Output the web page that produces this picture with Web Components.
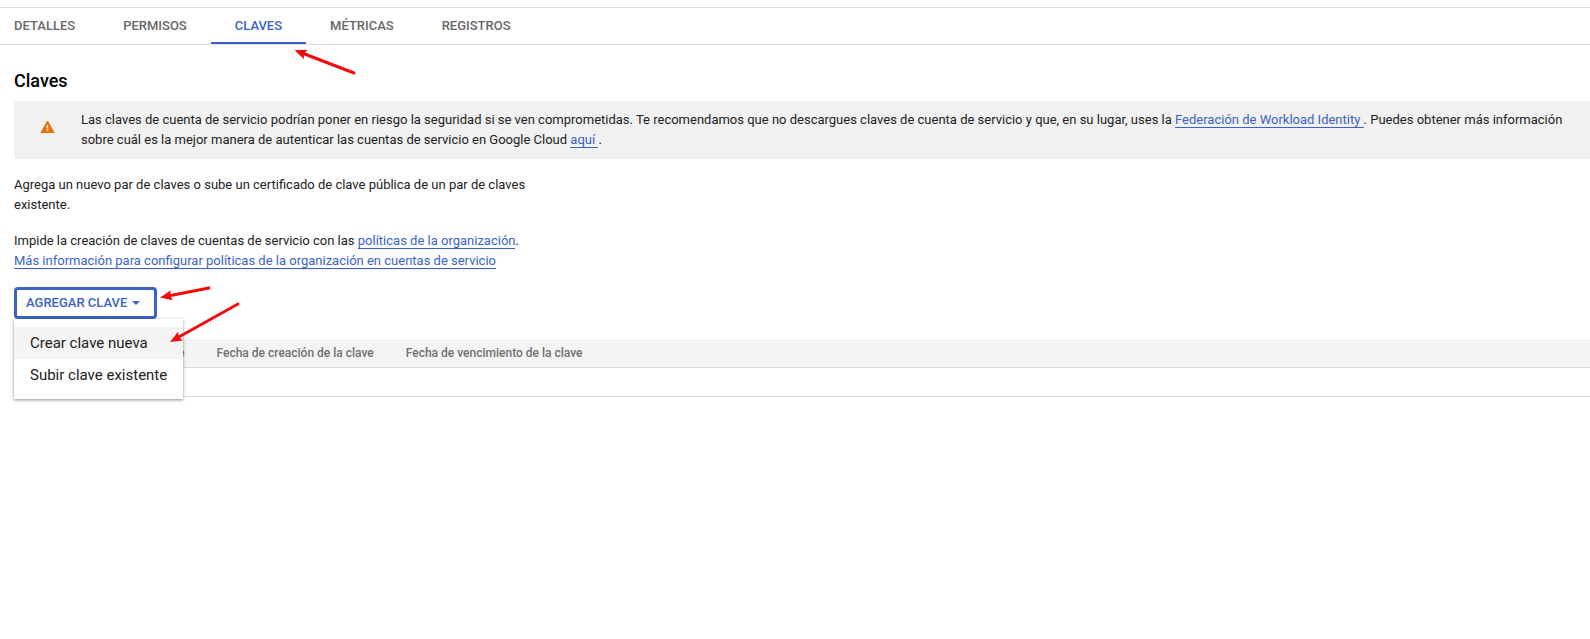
<!DOCTYPE html>
<html lang="es">
<head>
<meta charset="utf-8">
<title>Claves</title>
<style>
body {
    --blue: #3b63c6;
    --line: #dedede;
    box-sizing: border-box;
    min-height: 100vh;
    margin: 0;
    padding-top: 7px;
    background: #fff;
    color: #212121;
    font: 13px/20px Roboto, Arial, sans-serif;
}
main { padding: 25px 0 0 14px; }
h1 { margin: 0 0 9px; color: #000; font-size: 18px; line-height: 22px; font-weight: 500; }
p { max-width: 528px; margin: 16px 0; }
</style>
</head>
<body>

<tab-bar>
    <tab-link>DETALLES</tab-link>
    <tab-link>PERMISOS</tab-link>
    <tab-link selected>CLAVES</tab-link>
    <tab-link>MÉTRICAS</tab-link>
    <tab-link>REGISTROS</tab-link>
</tab-bar>

<main>
    <h1>Claves</h1>
    <warning-box>Las claves de cuenta de servicio podrían poner en riesgo la seguridad si se ven comprometidas. Te recomendamos que no descargues claves de cuenta de servicio y que, en su lugar, uses la <text-link>Federación de Workload Identity&nbsp;</text-link>. Puedes obtener más información sobre cuál es la mejor manera de autenticar las cuentas de servicio en Google Cloud <text-link>aquí&nbsp;</text-link>.</warning-box>
    <p>Agrega un nuevo par de claves o sube un certificado de clave pública de un par de claves existente.</p>
    <p>Impide la creación de claves de cuentas de servicio con las <text-link>políticas de la organización</text-link>.<br>
    <text-link>Más información para configurar políticas de la organización en cuentas de servicio</text-link></p>
    <menu-button label="AGREGAR CLAVE">
        <menu-option active>Crear clave nueva</menu-option>
        <menu-option>Subir clave existente</menu-option>
    </menu-button>
    <key-table></key-table>
</main>

<arrow-notes></arrow-notes>

<script>
class TabBar extends HTMLElement {
    constructor() {
        super();
        this.attachShadow({ mode: 'open' }).innerHTML = `
        <style>
        :host { display: block; border: solid var(--line); border-width: 1px 0; }
        nav { display: flex; margin-left: -10px; }
        </style>
        <nav><slot></slot></nav>
        `;
    }
}

class TabLink extends HTMLElement {
    constructor() {
        super();
        this.attachShadow({ mode: 'open' }).innerHTML = `
        <style>
        :host { display: block; }
        a {
            display: block;
            padding: 8px 24px 6px;
            border-bottom: 2px solid transparent;
            color: #666;
            font-weight: 500;
            text-decoration: none;
        }
        :host([selected]) a { color: var(--blue); border-color: var(--blue); }
        </style>
        <a href="#"><slot></slot></a>
        `;
    }
}

class TextLink extends HTMLElement {
    constructor() {
        super();
        // no white space round the <a>: the link sits inside a sentence
        this.attachShadow({ mode: 'open' }).innerHTML = `<style>
        :host { display: inline; }
        a { color: var(--blue); text-decoration: none; border-bottom: 1px solid; }
        </style><a href="#"><slot></slot></a>`;
    }
}

class WarningBox extends HTMLElement {
    constructor() {
        super();
        this.attachShadow({ mode: 'open' }).innerHTML = `
        <style>
        :host {
            display: flex;
            gap: 26px;
            padding: 9px 24px 9px 26px;
            background: #f1f1f1;
            border-radius: 4px 0 0 4px;
        }
        svg { flex: none; margin-top: 9px; }
        </style>
        <svg width="15" height="15" viewBox="0 0 15 15" aria-hidden="true">
            <path fill="#e0730c" stroke="#e0730c" stroke-linejoin="round" d="M7.5 2 14 13.500H1z"/>
            <path fill="#fff" d="M6.800 6h1.400v3.500H6.800zM6.800 10.500h1.400V12H6.800z"/>
        </svg>
        <div><slot></slot></div>
        `;
    }
}

class MenuButton extends HTMLElement {
    constructor() {
        super();
        this.attachShadow({ mode: 'open' }).innerHTML = `
        <style>
        :host { display: block; position: relative; width: max-content; }
        button {
            display: flex;
            align-items: center;
            gap: 5px;
            height: 32px;
            padding: 0 14px 0 9px;
            border: 3px solid var(--blue);
            border-radius: 4px;
            background: #fff;
            color: var(--blue);
            font: 500 13px/20px Roboto, Arial, sans-serif;
        }
        .menu {
            position: absolute;
            top: 100%;
            left: 0;
            z-index: 1;
            padding: 8px 0;
            background: #fff;
            box-shadow: 0 1px 3px rgba(0, 0, 0, .45);
        }
        </style>
        <button type="button" aria-haspopup="menu" aria-expanded="true">
            <span></span>
            <svg width="8" height="4" viewBox="0 0 8 4" aria-hidden="true"><path fill="currentColor" d="M0 0h8L4 4z"/></svg>
        </button>
        <div class="menu" role="menu"><slot></slot></div>
        `;
    }

    connectedCallback() {
        this.shadowRoot.querySelector('span').textContent = this.getAttribute('label');
    }
}

class MenuOption extends HTMLElement {
    constructor() {
        super();
        this.attachShadow({ mode: 'open' }).innerHTML = `
        <style>
        :host { display: block; }
        button {
            display: block;
            width: 100%;
            padding: 6px 16px;
            border: 0;
            background: none;
            color: #212121;
            font: 15px/20px Roboto, Arial, sans-serif;
            text-align: left;
            white-space: nowrap;
        }
        :host([active]) button { background: #f4f4f4; }
        </style>
        <button type="button" role="menuitem"><slot></slot></button>
        `;
    }
}

class KeyTable extends HTMLElement {
    constructor() {
        super();
        this.attachShadow({ mode: 'open' }).innerHTML = `
        <style>
        :host { display: block; margin-top: 20px; }
        table { width: 100%; border-collapse: collapse; }
        th {
            padding: 4px 16px;
            background: #f4f4f4;
            border-bottom: 1px solid var(--line);
            color: #707070;
            font-size: 12px;
            font-weight: 500;
            text-align: left;
            white-space: nowrap;
        }
        th:last-child { width: 100%; }
        td { height: 28px; padding: 0; border-bottom: 1px solid var(--line); }
        </style>
        <table>
            <thead>
                <tr>
                    <th>Tipo</th>
                    <th>Estado</th>
                    <th>Clave</th>
                    <th>Fecha de creación de la clave</th>
                    <th>Fecha de vencimiento de la clave</th>
                </tr>
            </thead>
            <tbody><tr><td colspan="5"></td></tr></tbody>
        </table>
        `;
    }
}

// red pointers drawn over the page
class ArrowNotes extends HTMLElement {
    constructor() {
        super();
        this.attachShadow({ mode: 'open' }).innerHTML = `
        <style>
        :host { position: absolute; top: 0; left: 0; z-index: 2; pointer-events: none; }
        svg { display: block; }
        </style>
        <svg width="360" height="350" aria-hidden="true">
            <defs>
                <marker id="head" markerUnits="userSpaceOnUse" markerWidth="12" markerHeight="10" refX="4" refY="5" orient="auto">
                    <path fill="#f30b0b" d="M12 5 0 0 2 5 0 10z"/>
                </marker>
            </defs>
            <g fill="none" stroke="#f30b0b" stroke-width="3" stroke-linecap="round">
                <path marker-end="url(#head)" d="M354 73 302 53"/>
                <path marker-end="url(#head)" d="M209 288 168 296"/>
                <path marker-end="url(#head)" d="M238 304 177 338"/>
            </g>
        </svg>
        `;
    }
}

customElements.define('tab-bar', TabBar);
customElements.define('tab-link', TabLink);
customElements.define('text-link', TextLink);
customElements.define('warning-box', WarningBox);
customElements.define('menu-button', MenuButton);
customElements.define('menu-option', MenuOption);
customElements.define('key-table', KeyTable);
customElements.define('arrow-notes', ArrowNotes);
</script>
</body>
</html>
